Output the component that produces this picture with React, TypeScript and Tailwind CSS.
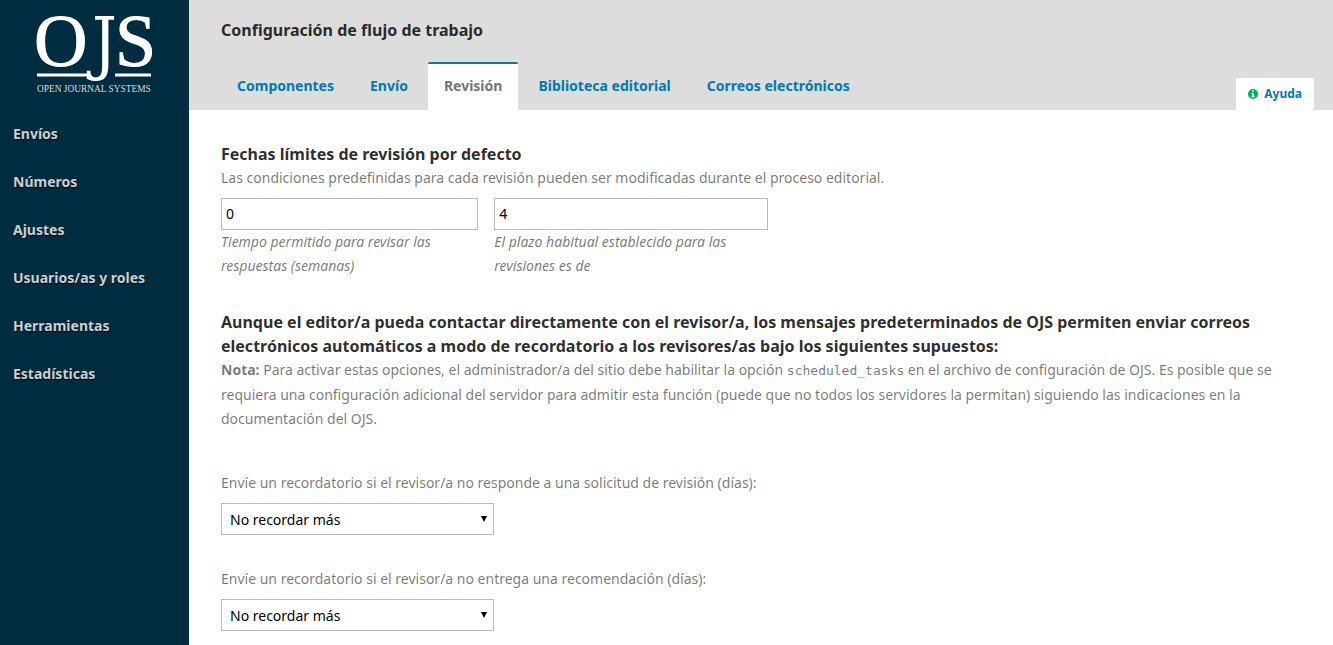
const navItems = ['Envíos', 'Números', 'Ajustes', 'Usuarios/as y roles', 'Herramientas', 'Estadísticas'];
const tabs = ['Componentes', 'Envío', 'Revisión', 'Biblioteca editorial', 'Correos electrónicos'];
const activeTab = 'Revisión';

function Logo() {
  return (
    <svg width="130" height="98" viewBox="30 0 130 98" fill="#fff" role="img" aria-label="Open Journal Systems">
      <g fontFamily="Liberation Serif, serif">
        <text x="34" y="66" fontSize="74" stroke="#fff" strokeWidth="1">O</text>
        <text x="92" y="67" fontSize="69" fontFamily="DejaVu Serif Condensed, DejaVu Serif, serif">J</text>
        <text x="115" y="66" fontSize="74" stroke="#fff" strokeWidth="1">S</text>
        <text x="37" y="92" fontSize="9.4" fill="#d5dde1">OPEN JOURNAL SYSTEMS</text>
      </g>
      <rect x="37" y="73.5" width="53" height="3" />
      <rect x="115" y="73.5" width="36" height="3" />
    </svg>
  );
}

function InfoIcon() {
  return (
    <svg width="10" height="10" viewBox="0 0 10 10" aria-hidden="true">
      <circle cx="5" cy="5" r="5" fill="#00b24e" />
      <path d="M4 1.5h2v1.5H4zM3.4 4H6v3.2h.7v1.1H3.4V7.2H4V5h-.6z" fill="#fff" />
    </svg>
  );
}

function NumberField({ id, value, label }: { id: string; value: string; label: string }) {
  return (
    <div>
      <input
        id={id}
        type="text"
        defaultValue={value}
        className="block h-8 w-full border border-[#bbb] bg-white px-1 pb-0.5 text-sm text-black"
      />
      <label htmlFor={id} className="block text-sm leading-6 italic">
        {label}
      </label>
    </div>
  );
}

function ReminderSelect({ id, label }: { id: string; label: string }) {
  return (
    <div>
      <label htmlFor={id} className="block text-sm leading-6">
        {label}
      </label>
      <div className="relative mt-2 w-1/4">
        <select
          id={id}
          className="block h-8 w-full appearance-none border border-[#bbb] bg-white px-2 pt-0.5 text-sm text-black"
        >
          <option>No recordar más</option>
        </select>
        <svg
          width="6"
          height="6"
          viewBox="0 0 6 6"
          className="pointer-events-none absolute top-[13px] right-[7px]"
          aria-hidden="true"
        >
          <path d="M0 0h6L3 6z" fill="#000" />
        </svg>
      </div>
    </div>
  );
}

export default function App() {
  return (
    <div className="flex min-h-screen bg-white font-['Noto_Sans',sans-serif] text-sm leading-6 text-black/54">
      <aside className="w-[189px] shrink-0 bg-[#002c40]">
        <a href="#" className="block pl-[30px]">
          <Logo />
        </a>
        <nav className="mt-6">
          <ul className="flex flex-col gap-6">
            {navItems.map((item) => (
              <li key={item}>
                <a
                  href="#"
                  className="block pl-[13px] leading-6 font-bold text-[#ccd0d3] [text-shadow:0_1px_1px_#000]"
                >
                  {item}
                </a>
              </li>
            ))}
          </ul>
        </nav>
      </aside>

      <main className="min-w-0 flex-1">
        <header className="bg-[#ddd] pr-[19px] pl-8">
          <h1 className="pt-[18px] text-base leading-6 font-bold text-black/84">
            Configuración de flujo de trabajo
          </h1>
          <div className="mt-5 flex items-end justify-between">
            <nav className="flex gap-1">
              {tabs.map((tab) => (
                <a
                  key={tab}
                  href="#"
                  aria-current={tab === activeTab ? 'page' : undefined}
                  className={
                    tab === activeTab
                      ? 'block rounded-t-xs border-t-2 border-[#007ab2] bg-white px-4 pt-2.5 pb-3 font-bold text-[#757575]'
                      : 'block border-t-2 border-transparent px-4 pt-2.5 pb-3 font-bold text-[#007ab2]'
                  }
                >
                  {tab}
                </a>
              ))}
            </nav>
            <a
              href="#"
              className="flex h-8 items-center gap-1.5 rounded-t-xs bg-white px-3 text-xs font-bold text-[#007ab2]"
            >
              <InfoIcon />
              Ayuda
            </a>
          </div>
        </header>

        <form className="pt-8 pr-[19px] pl-8">
          <section>
            <h2 className="text-base leading-6 font-bold text-black/84">Fechas límites de revisión por defecto</h2>
            <p>Las condiciones predefinidas para cada revisión pueden ser modificadas durante el proceso editorial.</p>
            <div className="mt-2 flex">
              <div className="w-1/4 pr-4">
                <NumberField
                  id="response-weeks"
                  value="0"
                  label="Tiempo permitido para revisar las respuestas (semanas)"
                />
              </div>
              <div className="w-1/4">
                <NumberField
                  id="review-weeks"
                  value="4"
                  label="El plazo habitual establecido para las revisiones es de"
                />
              </div>
            </div>
          </section>

          <section className="mt-8">
            <h2 className="text-base leading-6 font-bold text-black/84">
              Aunque el editor/a pueda contactar directamente con el revisor/a, los mensajes predeterminados de OJS
              permiten enviar correos electrónicos automáticos a modo de recordatorio a los revisores/as bajo los
              siguientes supuestos:
            </h2>
            <p>
              <strong className="font-bold">Nota:</strong> Para activar estas opciones, el administrador/a del sitio
              debe habilitar la opción{' '}
              <code className="font-['DejaVu_Sans_Mono',monospace] text-[13px] leading-6">scheduled_tasks</code> en el
              archivo de configuración de OJS. Es posible que se requiera una configuración adicional del servidor para
              admitir esta función (puede que no todos los servidores la permitan) siguiendo las indicaciones en la
              documentación del OJS.
            </p>
            <div className="mt-10 flex flex-col gap-8">
              <ReminderSelect
                id="response-reminder"
                label="Envíe un recordatorio si el revisor/a no responde a una solicitud de revisión (días):"
              />
              <ReminderSelect
                id="recommendation-reminder"
                label="Envíe un recordatorio si el revisor/a no entrega una recomendación (días):"
              />
            </div>
          </section>
        </form>
      </main>
    </div>
  );
}
